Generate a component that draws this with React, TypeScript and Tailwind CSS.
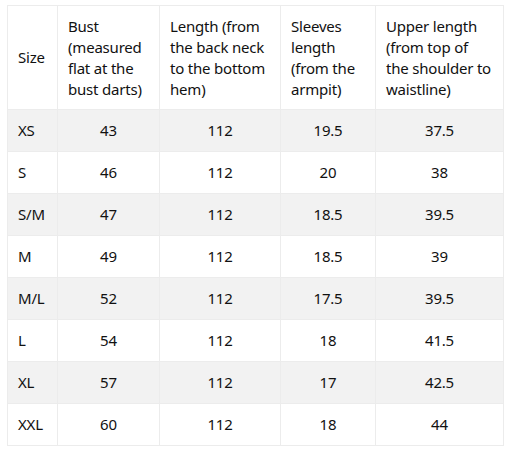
const headers = [
  ["Size"],
  ["Bust", "(measured", "flat at the", "bust darts)"],
  ["Length (from", "the back neck", "to the bottom", "hem)"],
  ["Sleeves", "length", "(from the", "armpit)"],
  ["Upper length", "(from top of", "the shoulder to", "waistline)"],
]

const rows = [
  ["XS", "43", "112", "19.5", "37.5"],
  ["S", "46", "112", "20", "38"],
  ["S/M", "47", "112", "18.5", "39.5"],
  ["M", "49", "112", "18.5", "39"],
  ["M/L", "52", "112", "17.5", "39.5"],
  ["L", "54", "112", "18", "41.5"],
  ["XL", "57", "112", "17", "42.5"],
  ["XXL", "60", "112", "18", "44"],
]

export default function App() {
  return (
    <div className="bg-white w-[508px] h-[449px] pt-[5px] pl-[7px] font-['Noto_Sans',sans-serif] text-[15px] leading-[21px] tracking-[-0.2px] text-[#111]">
      <table className="table-fixed border-collapse w-[496px] border border-[#ececec]">
        <colgroup>
          <col className="w-[50px]" />
          <col className="w-[102px]" />
          <col className="w-[121px]" />
          <col className="w-[95px]" />
          <col className="w-[128px]" />
        </colgroup>
        <thead>
          <tr>
            {headers.map((lines) => (
              <th
                key={lines[0]}
                className="border border-[#ececec] px-[10px] py-[9.5px] text-left font-normal align-middle whitespace-nowrap"
              >
                {lines.map((l, k) => (
                  <span key={k} className="block">
                    {l}
                  </span>
                ))}
              </th>
            ))}
          </tr>
        </thead>
        <tbody>
          {rows.map((r, i) => (
            <tr key={r[0]} className={i % 2 === 0 ? "bg-[#f2f2f2]" : "bg-white"}>
              {r.map((c, j) => (
                <td
                  key={j}
                  className={`border border-[#ececec] px-[10px] py-[10px] ${j === 0 ? "text-left" : "text-center"}`}
                >
                  {c}
                </td>
              ))}
            </tr>
          ))}
        </tbody>
      </table>
    </div>
  )
}
